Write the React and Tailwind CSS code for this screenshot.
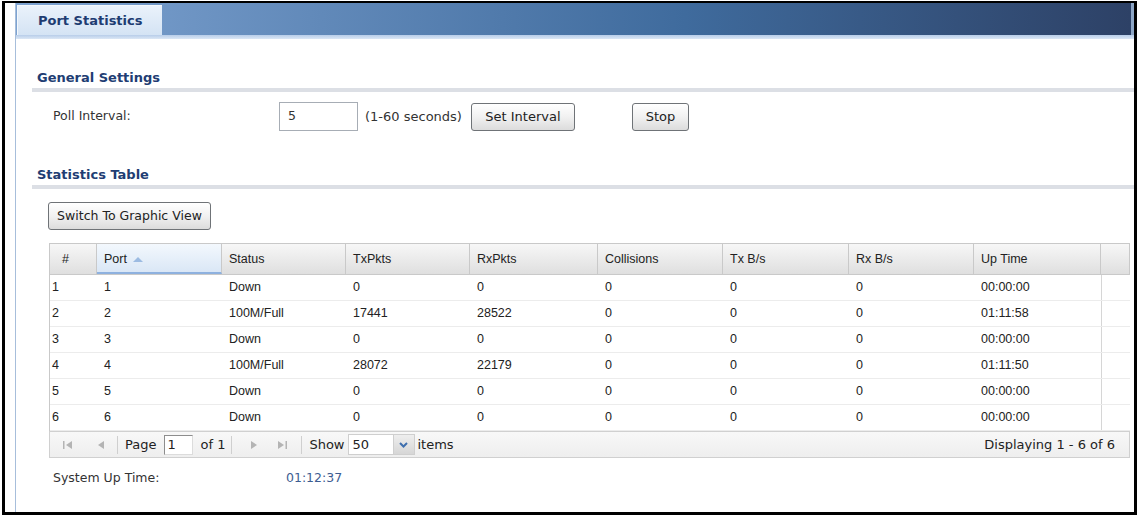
import React from "react";

const cols = [
  { key: "n", label: "#" },
  { key: "port", label: "Port" },
  { key: "status", label: "Status" },
  { key: "tx", label: "TxPkts" },
  { key: "rx", label: "RxPkts" },
  { key: "col", label: "Collisions" },
  { key: "txb", label: "Tx B/s" },
  { key: "rxb", label: "Rx B/s" },
  { key: "up", label: "Up Time" },
];

const rows = [
  ["1", "1", "Down", "0", "0", "0", "0", "0", "00:00:00"],
  ["2", "2", "100M/Full", "17441", "28522", "0", "0", "0", "01:11:58"],
  ["3", "3", "Down", "0", "0", "0", "0", "0", "00:00:00"],
  ["4", "4", "100M/Full", "28072", "22179", "0", "0", "0", "01:11:50"],
  ["5", "5", "Down", "0", "0", "0", "0", "0", "00:00:00"],
  ["6", "6", "Down", "0", "0", "0", "0", "0", "00:00:00"],
];

const gridCols =
  "grid grid-cols-[47px_125px_124px_124px_128px_125px_126px_125px_127px_1fr]";

function Btn({ children, className = "" }) {
  return (
    <button
      className={
        "h-[28px] rounded-[3px] border border-[#6f7377] bg-gradient-to-b from-white via-[#f1f1f1] to-[#dcdcdc] text-[#222] font-['DejaVu_Sans'] " +
        className
      }
    >
      {children}
    </button>
  );
}

function Heading({ children }) {
  return (
    <div>
      <div className="pl-[21px] text-[13px] font-bold text-[#213d73] leading-[15px]">{children}</div>
      <div className="ml-[16px] mt-[3px] h-[4px] bg-[#dcdfe5]" />
    </div>
  );
}

function PagerIcon({ kind }) {
  const c = "#b4b4b4";
  return (
    <svg width="12" height="12" viewBox="0 0 12 12">
      {kind === "first" && (
        <>
          <rect x="1" y="2" width="1.5" height="8" fill={c} />
          <path d="M10 2 L4 6 L10 10 Z" fill={c} />
        </>
      )}
      {kind === "prev" && <path d="M9 2 L3 6 L9 10 Z" fill={c} />}
      {kind === "next" && <path d="M3 2 L9 6 L3 10 Z" fill={c} />}
      {kind === "last" && (
        <>
          <path d="M2 2 L8 6 L2 10 Z" fill={c} />
          <rect x="9.5" y="2" width="1.5" height="8" fill={c} />
        </>
      )}
    </svg>
  );
}

const Sep = ({ className = "" }) => <div className={"w-px h-[18px] bg-[#cfcfcf] " + className} />;

export default function App() {
  return (
    <div className="w-[1140px] h-[518px] bg-white pl-[2px] pt-[1px] font-['DejaVu_Sans'] text-[12.5px] text-[#333]">
      <div className="w-[1135px] h-[514px] border-black border-x-[3px] border-t-2 border-b-[3px] flex">
        <div className="w-[10px] shrink-0" />
        <div className="flex-1 border-l border-[#a7bedb] flex flex-col">
          {/* tab bar */}
          <div className="h-[32px] flex bg-gradient-to-r from-[#7ea3d1] via-[#3f6b9d] via-60% to-[#2d4166] border-r-[3px] border-[#8da6c6]">
            <div className="ml-px mt-[2px] w-[145px] h-[30px] bg-gradient-to-b from-[#eaf2fb] to-[#d4e3f4] border-t border-l border-[#f4f8fc] flex items-center pl-[20px] text-[13px] font-bold text-[#1e3c72]">
              Port Statistics
            </div>
          </div>
          <div className="h-[4px] bg-gradient-to-b from-[#b7cde9] to-[#dbe7f5]" />

          <div className="mt-[31px]">
            <Heading>General Settings</Heading>
          </div>
          <div className="mt-[10px] flex items-center h-[29px]">
            <div className="pl-[37px] w-[263px]">Poll Interval:</div>
            <div className="w-[79px] h-[29px] border border-[#a7adb5] flex items-center pl-[8px]">5</div>
            <div className="ml-[7px] text-[13px]">(1-60 seconds)</div>
            <Btn className="ml-[9px] w-[104px] text-[13px]">Set Interval</Btn>
            <Btn className="ml-[57px] w-[57px] text-[13px]">Stop</Btn>
          </div>

          <div className="mt-[36px]">
            <Heading>Statistics Table</Heading>
          </div>
          <div className="mt-[13px] pl-[32px]">
            <Btn className="w-[163px] text-[12.5px]">Switch To Graphic View</Btn>
          </div>

          {/* table */}
          <div className="mt-[13px] ml-[33px] mr-[4px] font-['Liberation_Sans'] text-[12.5px] text-[#222]">
            <div className={gridCols + " h-[32px] border border-[#c9c9c9] bg-gradient-to-b from-[#f7f7f7] to-[#dfdfdf]"}>
              {cols.map((c, i) => (
                <div
                  key={c.key}
                  className={
                    "flex items-center border-r border-[#c9c9c9] " +
                    (i === 0 ? "pl-[12px]" : "pl-[7px]") +
                    (c.key === "port"
                      ? " bg-gradient-to-b from-[#f3f8fd] to-[#dae7f6] border-b-2 border-b-[#8eb1df] pt-[2px]"
                      : "")
                  }
                >
                  <span>{c.label}</span>
                  {c.key === "port" && (
                    <svg width="10" height="6" viewBox="0 0 10 6" className="ml-[6px]">
                      <path d="M0 6 L5 1 L10 6 Z" fill="#9cbbe2" />
                    </svg>
                  )}
                </div>
              ))}
              <div />
            </div>
            <div className="border-l border-[#c9c9c9]">
              {rows.map((r) => (
                <div key={r[0]} className={gridCols + " h-[26px] border-b border-[#ececec]"}>
                  {r.map((v, i) => (
                    <div key={i} className={"flex items-center " + (i === 0 ? "pl-[2px]" : "pl-[7px]")}>
                      {v}
                    </div>
                  ))}
                  <div className="border-l border-[#d6d6d6]" />
                </div>
              ))}
            </div>
            {/* pager */}
            <div className="h-[27px] border border-[#d0d0d0] bg-gradient-to-b from-[#f8f8f8] to-[#eeeeee] flex items-center pl-[12px] pr-[14px] font-['DejaVu_Sans'] text-[13px] text-[#222]">
              <PagerIcon kind="first" />
              <div className="w-[21px]" />
              <PagerIcon kind="prev" />
              <Sep className="ml-[10px] mr-[7px]" />
              <span>Page</span>
              <div className="ml-[8px] w-[29px] h-[20px] bg-white border border-[#8d8d8d] border-r-[#dcdcdc] border-b-[#dcdcdc] flex items-center pl-[2px]">1</div>
              <span className="ml-[7px]">of 1</span>
              <Sep className="ml-[6px] mr-[16px]" />
              <PagerIcon kind="next" />
              <div className="w-[16px]" />
              <PagerIcon kind="last" />
              <Sep className="ml-[13px] mr-[7px]" />
              <span>Show</span>
              <div className="ml-[3px] w-[67px] h-[21px] bg-white border border-[#cfcfcf] flex">
                <div className="flex-1 flex items-center pl-[4px]">50</div>
                <div className="w-[21px] bg-gradient-to-b from-[#eeeeee] to-[#d6d6d6] border-l border-[#cfcfcf] flex items-center justify-center">
                  <svg width="9" height="6" viewBox="0 0 9 6">
                    <path d="M1 1 L4.5 4.5 L8 1" stroke="#3f6fae" strokeWidth="2" fill="none" />
                  </svg>
                </div>
              </div>
              <span className="ml-[3px]">items</span>
              <span className="ml-auto">Displaying 1 - 6 of 6</span>
            </div>
          </div>

          <div className="mt-[11px] flex">
            <div className="pl-[37px] w-[270px]">System Up Time:</div>
            <div className="text-[#3d5d92]">01:12:37</div>
          </div>
        </div>
      </div>
    </div>
  );
}
